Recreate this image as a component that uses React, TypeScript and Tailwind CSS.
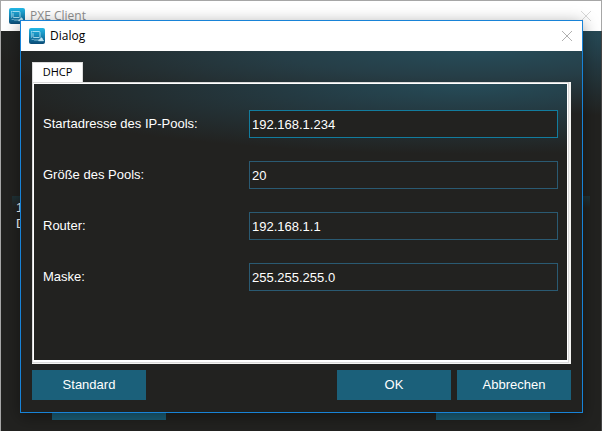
import React, { useState } from 'react';

type FieldKey = 'start' | 'size' | 'router' | 'mask';

const FIELDS: { key: FieldKey; label: string }[] = [
  { key: 'start', label: 'Startadresse des IP-Pools:' },
  { key: 'size', label: 'Größe des Pools:' },
  { key: 'router', label: 'Router:' },
  { key: 'mask', label: 'Maske:' },
];

const DEFAULTS: Record<FieldKey, string> = {
  start: '192.168.1.234',
  size: '20',
  router: '192.168.1.1',
  mask: '255.255.255.0',
};

const AppIcon: React.FC<{ id: string }> = ({ id }) => (
  <svg viewBox="0 0 16 16" className="h-4 w-4 shrink-0" aria-hidden="true">
    <defs>
      <linearGradient id={id} x1="0" y1="0" x2="0" y2="1">
        <stop offset="0" stopColor="#22b8e6" />
        <stop offset="0.5" stopColor="#1787b5" />
        <stop offset="1" stopColor="#0a4a75" />
      </linearGradient>
    </defs>
    <rect width="16" height="16" rx="2" fill={`url(#${id})`} />
    {/* monitor with a cable to the client at the bottom right */}
    <g fill="none" stroke="#c4ebf8" strokeWidth="0.8" strokeLinecap="round" strokeLinejoin="round">
      <path d="M4.5 3.5H10q1 0 1 1v4.8" />
      <path d="M4 5.5v3.2q0 .8.8.8h5" />
      <path d="M2.5 3.5h1.8M2.5 3.5v6" opacity="0.6" />
      <path d="M5.5 12h4.3" opacity="0.8" />
      <path d="M3 11.5h1.5" opacity="0.6" />
      <path d="M10 12.7h4.5l-1-1.4h-2.6z" fill="#d9f3fb" />
      <circle cx="12.3" cy="10.4" r="0.6" fill="#d9f3fb" />
    </g>
  </svg>
);

const CloseButton: React.FC<{ label: string; className: string }> = ({ label, className }) => (
  <button type="button" aria-label={label} className={`flex h-full items-center ${className}`}>
    <svg viewBox="0 0 10 10" className="h-[10px] w-[10px]" fill="none" stroke="currentColor">
      <path d="M0 0l10 10M10 0L0 10" />
    </svg>
  </button>
);

const PushButton: React.FC<{ children?: React.ReactNode; disabled?: boolean; onClick?: () => void }> = ({ children, disabled, onClick }) => (
  <button
    type="button"
    disabled={disabled}
    onClick={onClick}
    className="h-[30px] w-[114px] bg-[#1b607a] text-[13px] text-white enabled:hover:bg-[#22708d]"
  >
    {children}
  </button>
);

const DhcpDialog: React.FC = () => {
  const [values, setValues] = useState(DEFAULTS);

  return (
    <div
      role="dialog"
      aria-labelledby="dialog-title"
      className="absolute top-[19px] right-[19px] left-[19px] border border-[#1883d7] bg-[#222220] shadow-[0_4px_16px_rgba(0,0,0,0.4)]"
    >
      <div className="flex h-[30px] items-center gap-[5px] bg-white pl-2">
        <AppIcon id="icon-dialog" />
        <h2 id="dialog-title" className="flex-1 font-['Open_Sans',sans-serif] text-[12px] text-black">Dialog</h2>
        <CloseButton label="Schließen" className="pr-[10px] text-[#b0b0b0]" />
      </div>

      <div className="bg-[radial-gradient(ellipse_90%_64px_at_82%_0,#264c59,#263e47_40%,#222220)] px-[11px] pt-[11px] pb-3">
        <div role="tablist" className="flex">
          <button
            type="button"
            role="tab"
            aria-selected="true"
            className="h-5 w-[51px] border-t border-r border-l border-[#dcdcdc] bg-white font-['Open_Sans',sans-serif] text-[11px] text-black"
          >
            DHCP
          </button>
        </div>

        {/* Bevelled frame of the tab page */}
        <div role="tabpanel" className="border-r-2 border-b border-[#f4f4f2]">
          <div className="border border-[#d9d9d9]">
            <div className="grid grid-cols-[206px_1fr] items-center gap-y-[23px] border border-b-2 border-white bg-[#222220] bg-[radial-gradient(ellipse_90%_70px_at_82%_0,#264c59,#243a42_40%,#222220)] px-[9px] pt-[26px] pb-[69px] text-[13px] text-white">
              {FIELDS.map(({ key, label }) => (
                <React.Fragment key={key}>
                  <label htmlFor={key}>{label}</label>
                  <input
                    id={key}
                    type="text"
                    value={values[key]}
                    onChange={(e) => setValues({ ...values, [key]: e.target.value })}
                    className={`h-7 w-full min-w-0 border bg-[#222220] px-0.5 outline-none ${key === 'start' ? 'border-[#127c9e]' : 'border-[#2a5a72]'}`}
                  />
                </React.Fragment>
              ))}
            </div>
          </div>
        </div>

        <div className="mt-1.5 flex gap-1.5">
          <PushButton onClick={() => setValues(DEFAULTS)}>Standard</PushButton>
          <div className="flex-1" />
          <PushButton>OK</PushButton>
          <PushButton>Abbrechen</PushButton>
        </div>
      </div>
    </div>
  );
};

export default function App() {
  return (
    <div className="relative flex min-h-screen flex-col overflow-hidden border-t border-l border-[#a6a6a6] bg-[#222220] font-['Liberation_Sans',Arial,sans-serif]">
      <header className="flex h-[30px] items-center gap-[5px] border-r border-[#a6a6a6] bg-white pl-2">
        <AppIcon id="icon-window" />
        <h1 className="flex-1 font-['Open_Sans',sans-serif] text-[12px] text-[#8f8f8f]">PXE Client</h1>
        <CloseButton label="Fenster schließen" className="pr-[10px] text-[#d8d8d8]" />
      </header>

      <main className="flex flex-1 flex-col border-r border-[#454545] bg-[radial-gradient(ellipse_95%_85px_at_90%_0,#264c59,#243a42_40%,#222220)] px-[11px] pt-[165px] pb-[11px]">
        <div className="flex-1 bg-[linear-gradient(#1f3338,#222220_12px)] pt-1 pl-1 text-[13px] leading-4 text-white">
          <p>1</p>
          <p>D</p>
        </div>
        <div className="mt-1.5 flex justify-between pr-10 pl-10">
          <PushButton disabled />
          <PushButton disabled />
        </div>
      </main>

      <DhcpDialog />
    </div>
  );
}
